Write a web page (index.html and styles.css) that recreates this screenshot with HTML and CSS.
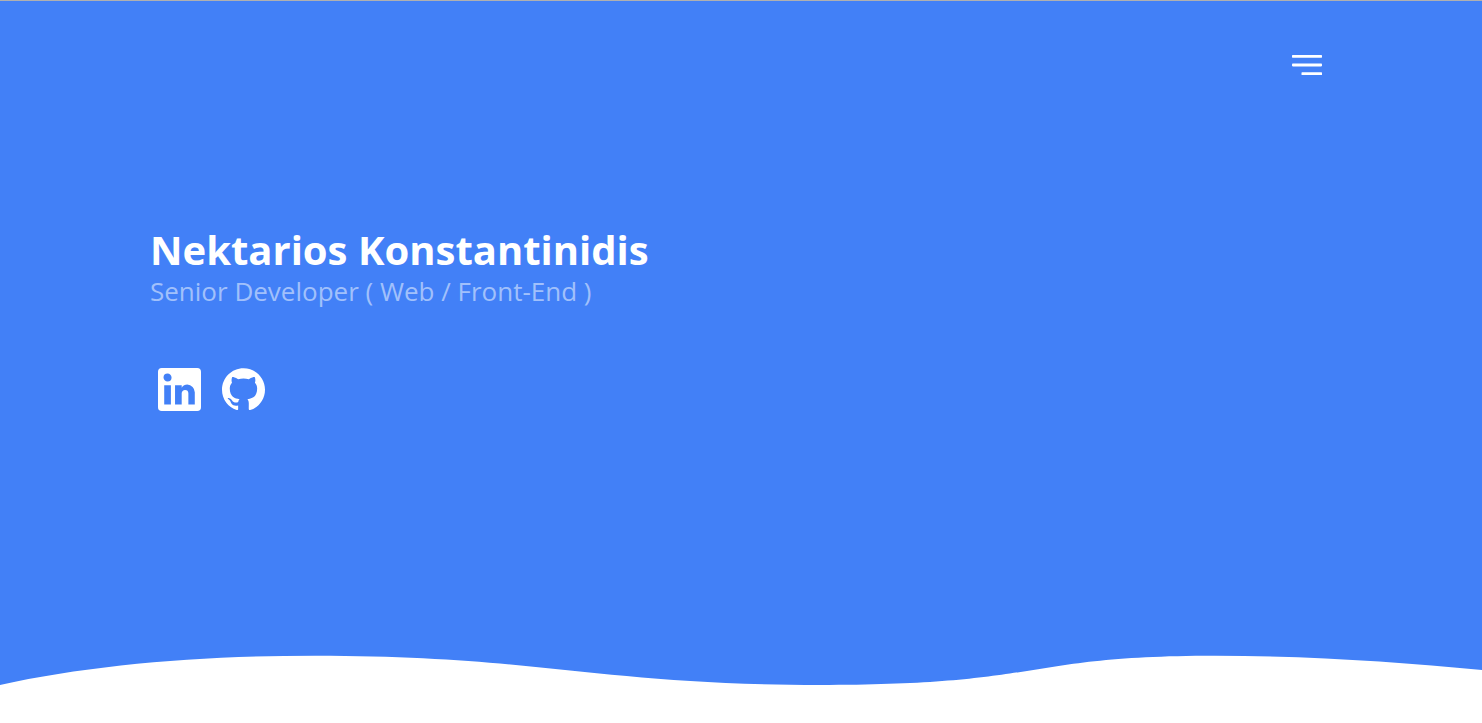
FILE: index.html
```html
<!DOCTYPE html>
<html lang="en">
<head>
<meta charset="utf-8">
<meta name="viewport" content="width=device-width, initial-scale=1">
<title>Nektarios Konstantinidis</title>
<link rel="stylesheet" href="styles.css">
</head>
<body>
<div class="hero">
  <header class="topbar">
    <button class="menu" type="button" aria-label="Open menu">
      <svg class="menu-icon" viewBox="0 0 30 21" aria-hidden="true">
        <rect x="0" y="0" width="30" height="2.7" rx=".6"/>
        <rect x="0" y="8.5" width="30" height="2.9" rx=".8"/>
        <rect x="9.5" y="17.3" width="20.5" height="2.7" rx=".6"/>
      </svg>
    </button>
  </header>
  <main class="intro">
    <h1 class="name">Nektarios Konstantinidis</h1>
    <p class="role">Senior Developer ( Web / Front-End )</p>
    <nav class="social" aria-label="Social profiles">
      <a class="social-link" href="#linkedin" aria-label="LinkedIn">
        <svg class="social-icon" viewBox="3 3 18 18" aria-hidden="true"><path d="M19.4 3A1.6 1.6 0 0 1 21 4.6V19.4A1.6 1.6 0 0 1 19.4 21H4.6A1.6 1.6 0 0 1 3 19.4V4.6A1.6 1.6 0 0 1 4.6 3H19.4M18.4 18.3V13.2A3.26 3.26 0 0 0 15.24 9.94C14.39 9.94 13.4 10.46 12.92 11.24V10.18H10.13V18.3H12.92V13.57C12.92 12.8 13.54 12.17 14.31 12.17A1.4 1.4 0 0 1 15.71 13.57V18.3H18.4M7 8.7A1.68 1.68 0 0 0 8.68 7.02C8.68 6.09 7.93 5.33 7 5.33A1.69 1.69 0 0 0 5.31 7.02C5.31 7.95 6.07 8.7 7 8.7M8.4 18.3V10.18H5.6V18.3H8.4Z"/></svg>
      </a>
      <a class="social-link" href="#github" aria-label="GitHub">
        <svg class="social-icon" viewBox="0 .2 24 24" aria-hidden="true"><path d="M12 .297c-6.63 0-12 5.373-12 12 0 5.303 3.438 9.8 8.205 11.385.6.113.82-.258.82-.577 0-.285-.01-1.04-.015-2.04-3.338.724-4.042-1.61-4.042-1.61C4.422 18.07 3.633 17.7 3.633 17.7c-1.087-.744.084-.729.084-.729 1.205.084 1.838 1.236 1.838 1.236 1.07 1.835 2.809 1.305 3.495.998.108-.776.417-1.305.76-1.605-2.665-.3-5.466-1.332-5.466-5.93 0-1.31.465-2.38 1.235-3.22-.135-.303-.54-1.523.105-3.176 0 0 1.005-.322 3.3 1.23.96-.267 1.98-.399 3-.405 1.02.006 2.04.138 3 .405 2.28-1.552 3.285-1.23 3.285-1.23.645 1.653.24 2.873.12 3.176.765.84 1.23 1.91 1.23 3.22 0 4.61-2.805 5.625-5.475 5.92.42.36.81 1.096.81 2.22 0 1.606-.015 2.896-.015 3.286 0 .315.21.69.825.57C20.565 22.092 24 17.592 24 12.297c0-6.627-5.373-12-12-12"/></svg>
      </a>
    </nav>
  </main>
  <svg class="wave" viewBox="0 0 1482 30" preserveAspectRatio="none" aria-hidden="true">
    <path d="M0 30C90 10 200 .7 315 .7C540 .7 600 30 820 30C1050 30 1020 .7 1215 .7C1310 .7 1400 7 1482 15V30Z"/>
  </svg>
</div>
</body>
</html>
```
FILE: styles.css
```css
* {
  box-sizing: border-box;
}

body {
  margin: 0;
  background: #fff;
  font-family: "Open Sans", "Noto Sans", sans-serif;
  color: #fff;
}

.hero {
  display: flex;
  flex-direction: column;
  min-height: calc(100vh - 38px);
  border-top: 1px solid #b0b0b0;
  background: #4280f7;
}

.topbar {
  display: flex;
  justify-content: flex-end;
  padding: 54px 160px 0;
}

.menu {
  display: block;
  padding: 0;
  border: 0;
  background: none;
  cursor: pointer;
}

.menu-icon {
  display: block;
  width: 30px;
  height: 21px;
  fill: #fff;
}

.intro {
  flex: 1;
  padding: 150px 150px 64px;
}

.name {
  margin: 0;
  font-size: 40px;
  line-height: 48px;
  font-weight: 700;
}

.role {
  margin: 0;
  font-size: 26px;
  line-height: 34px;
  color: #a1c0fb;
}

.social {
  display: flex;
  gap: 21px;
  padding: 60px 8px 0;
}

.social-link {
  display: block;
}

.social-icon {
  display: block;
  width: 43px;
  height: 43px;
  fill: #fff;
}

.wave {
  display: block;
  width: 100%;
  height: 30px;
  fill: #fff;
}
```
